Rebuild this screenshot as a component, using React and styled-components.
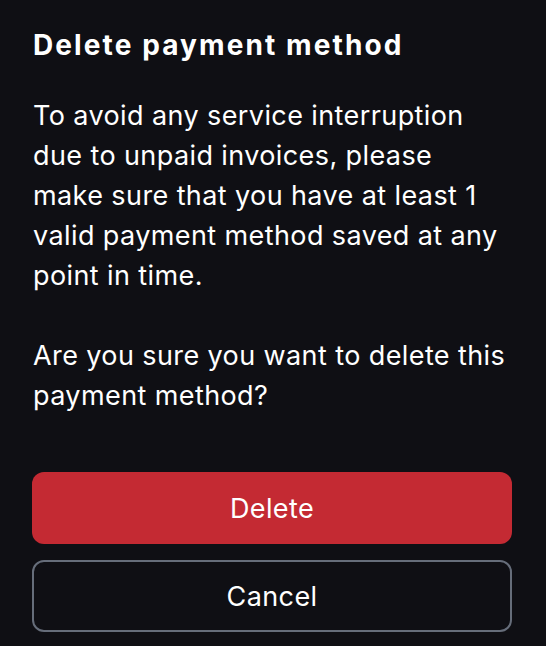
import styled, { createGlobalStyle } from 'styled-components';

const GlobalStyle = createGlobalStyle`
	html, body {
		margin: 0;
		padding: 0;
		background-color: #0f0f14;
	}
	body {
		font-family: Inter, "Noto Sans", sans-serif;
		color: #ffffff;
	}
`;

const Dialog = styled.div`
	width: 546px;
	height: 646px;
	box-sizing: border-box;
	padding: 27px 34px 0 32px;
	background-color: #0f0f14;
	display: flex;
	flex-direction: column;
`;

const Title = styled.h2`
	margin: 0;
	padding-left: 1px;
	font-size: 28px;
	line-height: 36px;
	font-weight: 700;
	letter-spacing: 2.1px;
`;

const Body = styled.div`
	margin-top: 33px;
	padding: 0 5px 0 1px;
	font-size: 27px;
	line-height: 40px;
	font-weight: 400;
	letter-spacing: 0.4px;
`;

const Paragraph = styled.p`
	margin: 0 0 40px;
	&:last-child {
		margin-bottom: 0;
	}
`;

const Actions = styled.div`
	margin-top: 56px;
	display: flex;
	flex-direction: column;
	gap: 16px;
`;

const Button = styled.button`
	height: 72px;
	width: 100%;
	box-sizing: border-box;
	border-radius: 12px;
	font-family: inherit;
	font-size: 27px;
	font-weight: 400;
	letter-spacing: 0.4px;
	color: #ffffff;
	cursor: pointer;
	border: ${(props) => (props.$variant === 'danger' ? 'none' : '2px solid #666d7a')};
	background-color: ${(props) => (props.$variant === 'danger' ? '#c42a33' : 'transparent')};
`;

function App() {
	return (
		<>
			<GlobalStyle />
			<Dialog>
				<Title>Delete payment method</Title>
				<Body>
					<Paragraph>
						To avoid any service interruption due to unpaid invoices, please make sure that you
						have at least 1 valid payment method saved at any point in time.
					</Paragraph>
					<Paragraph>Are you sure you want to delete this payment method?</Paragraph>
				</Body>
				<Actions>
					<Button $variant="danger">Delete</Button>
					<Button>Cancel</Button>
				</Actions>
			</Dialog>
		</>
	);
}

export default App;
